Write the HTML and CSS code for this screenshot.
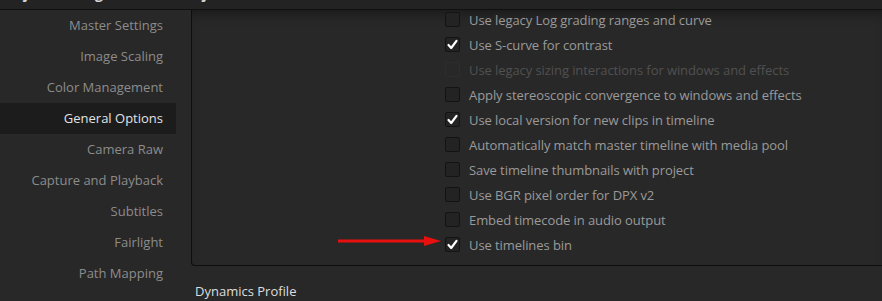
FILE: index.html
```html
<!DOCTYPE html>
<html lang="en">
<head>
  <meta charset="UTF-8">
  <title>Project Settings - General Options</title>
  <link rel="stylesheet" href="styles.css">
</head>
<body>
  <div class="titlebar"><span class="title">Project Settings: Untitled Project</span></div>

  <div class="main">
    <ul class="sidebar">
      <li>Master Settings</li>
      <li>Image Scaling</li>
      <li>Color Management</li>
      <li class="active">General Options</li>
      <li>Camera Raw</li>
      <li>Capture and Playback</li>
      <li>Subtitles</li>
      <li>Fairlight</li>
      <li>Path Mapping</li>
    </ul>

    <div class="content">
      <div class="panel">
        <ul class="options">
          <li><span class="box"></span>Use legacy Log grading ranges and curve</li>
          <li><span class="box checked"></span>Use S-curve for contrast</li>
          <li class="disabled"><span class="box"></span>Use legacy sizing interactions for windows and effects</li>
          <li><span class="box"></span>Apply stereoscopic convergence to windows and effects</li>
          <li><span class="box checked"></span>Use local version for new clips in timeline</li>
          <li><span class="box"></span>Automatically match master timeline with media pool</li>
          <li><span class="box"></span>Save timeline thumbnails with project</li>
          <li><span class="box"></span>Use BGR pixel order for DPX v2</li>
          <li><span class="box"></span>Embed timecode in audio output</li>
          <li><span class="box checked"></span>Use timelines bin</li>
        </ul>
      </div>
      <h2 class="section-title">Dynamics Profile</h2>
    </div>
  </div>

  <!-- annotation arrow drawn over the screenshot -->
  <svg class="arrow" width="106" height="12" viewBox="0 0 106 12">
    <line x1="0" y1="6" x2="90" y2="6" stroke="#e8100f" stroke-width="3"/>
    <polygon points="86,1 103,6 86,11" fill="#e8100f"/>
  </svg>

  <script>
    // draw the tick marks into the checked boxes
    var tick = '<svg width="13" height="13" viewBox="0 0 13 13"><path d="M2.5 7 L5.2 10 L10.5 2.8" fill="none" stroke="#fff" stroke-width="2.2" stroke-linecap="round" stroke-linejoin="round"/></svg>';
    document.querySelectorAll('.box.checked').forEach(function (el) {
      el.innerHTML = tick;
    });
  </script>
</body>
</html>
```

FILE: styles.css
```css
body {
  margin: 0;
  background-color: #282828;
  font-family: "Open Sans", "Noto Sans", sans-serif;
  font-size: 13px;
  color: #9a9a9a;
  overflow: hidden;
}
ul {
  list-style: none;
  margin: 0;
  padding: 0;
}
.titlebar {
  height: 9px;
  background-color: #232323;
  border-bottom: 1px solid #101010;
  overflow: hidden;
}
.title {
  display: block;
  margin-top: -15px;
  font-size: 14px;
  font-weight: 700;
  line-height: 18px;
  color: #d8d8d8;
}
.main {
  display: flex;
}
.sidebar {
  width: 176px;
  flex-shrink: 0;
}
.sidebar li {
  height: 31px;
  line-height: 31px;
  padding-right: 13px;
  text-align: right;
  color: #8c8c8c;
}
.sidebar li.active {
  background-color: #1c1c1c;
  color: #e2e2e2;
}
.content {
  flex: 1;
  margin-left: 15px;
}
.panel {
  height: 255px;
  border-left: 1px solid #0e0e0e;
  border-bottom: 1px solid #0e0e0e;
  border-bottom-left-radius: 4px;
  background-color: #282828;
  box-shadow: inset 0 10px 14px -8px rgba(0, 0, 0, 0.45);
  overflow: hidden;
}
.options {
  margin-top: -3px;
  padding-left: 253px;
  letter-spacing: -0.08px;
}
.options li {
  display: flex;
  align-items: center;
  gap: 9px;
  height: 25px;
  white-space: nowrap;
}
.options li.disabled {
  color: #505050;
}
.box {
  width: 13px;
  height: 13px;
  flex-shrink: 0;
  border: 1px solid #131313;
  border-radius: 2px;
  background-color: #232323;
  display: flex;
  align-items: center;
  justify-content: center;
}
.disabled .box {
  border-color: #2d2d2d;
  background-color: #282828;
}
.section-title {
  margin: 16px 0 0 4px;
  font-size: 13px;
  font-weight: 400;
  line-height: 18px;
  color: #dedede;
}
.arrow {
  position: absolute;
  left: 338px;
  top: 235px;
}
```
